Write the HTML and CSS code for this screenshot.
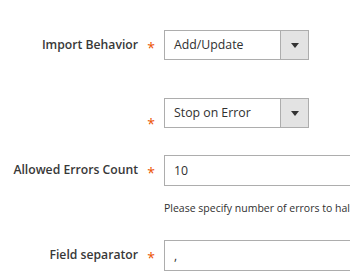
FILE: index.html
```html
<!DOCTYPE html>
<html>
<head>
<meta charset="utf-8">
<link rel="stylesheet" href="styles.css">
</head>
<body>
<div class="form">
  <div class="row row-1">
    <div class="label">Import Behavior</div>
    <div class="req">*</div>
    <div class="control">
      <div class="select"><span class="val">Add/Update</span><span class="arrow"><svg width="8" height="5" viewBox="0 0 8 5"><path d="M0 0H8L4 5Z" fill="#333"/></svg></span></div>
    </div>
  </div>
  <div class="row row-2">
    <div class="label"></div>
    <div class="req req-low">*</div>
    <div class="control">
      <div class="select"><span class="val">Stop on Error</span><span class="arrow"><svg width="8" height="5" viewBox="0 0 8 5"><path d="M0 0H8L4 5Z" fill="#333"/></svg></span></div>
    </div>
  </div>
  <div class="row row-3">
    <div class="label">Allowed Errors Count</div>
    <div class="req">*</div>
    <div class="control">
      <div class="input">10</div>
      <div class="note">Please specify number of errors to halt import process</div>
    </div>
  </div>
  <div class="row row-4">
    <div class="label">Field separator</div>
    <div class="req">*</div>
    <div class="control">
      <div class="input">,</div>
    </div>
  </div>
</div>
</body>
</html>
```
FILE: styles.css
```css
html, body {
  margin: 0;
  padding: 0;
  background: #fff;
  overflow: hidden;
}
body {
  width: 350px;
  height: 280px;
  font-family: "Open Sans", "Liberation Sans", sans-serif;
  color: #303030;
}
.form {
  padding-top: 30px;
}
.row {
  display: grid;
  grid-template-columns: 138px 26px 1fr;
  align-items: start;
}
.row-1 { margin-bottom: 38px; }
.row-2 { margin-bottom: 27px; }
.row-3 { margin-bottom: 24px; }
.label {
  font-size: 12.2px;
  font-weight: 600;
  text-align: right;
  line-height: 30px;
  white-space: nowrap;
  color: #383838;
}
.req {
  color: #eb5202;
  font-size: 14px;
  line-height: 30px;
  text-align: center;
  height: 30px;
  padding-top: 3px;
  box-sizing: border-box;
}
.req-low {
  padding-top: 11px;
}
.control {
  min-width: 0;
  white-space: nowrap;
  overflow: hidden;
}
.select {
  width: 145px;
  height: 30px;
  box-sizing: border-box;
  border: 1px solid #adadad;
  display: flex;
  font-size: 12.3px;
}
.val {
  flex: 1;
  line-height: 28px;
  padding-left: 9px;
}
.arrow {
  width: 27px;
  background: #e3e3e3;
  border-left: 1px solid #adadad;
  display: flex;
  align-items: center;
  justify-content: center;
}
.input {
  height: 31px;
  width: 260px;
  box-sizing: border-box;
  border: 1px solid #adadad;
  font-size: 12.3px;
  line-height: 29px;
  padding-left: 9px;
}
.note {
  font-size: 10.5px;
  margin-top: 14px;
  line-height: 16px;
}
```
